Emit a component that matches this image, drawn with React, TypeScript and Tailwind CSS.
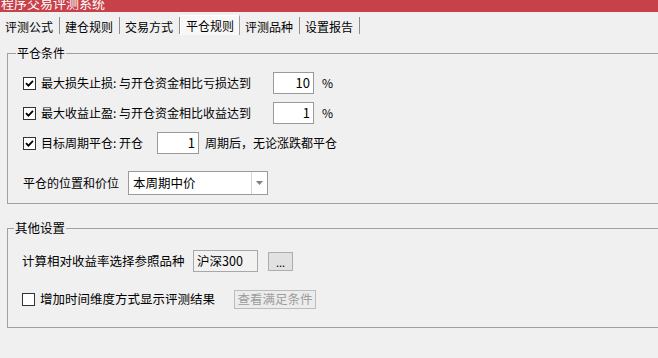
const font = { fontFamily: '"Noto Sans CJK SC", "Noto Sans", sans-serif' };

const tabs = ["评测公式", "建仓规则", "交易方式", "平仓规则", "评测品种", "设置报告"];

const Check = ({ checked }: { checked: boolean }) => (
  <div className="w-[13px] h-[13px] shrink-0 bg-white border border-[#333333] flex items-center justify-center">
    {checked && (
      <svg width="9" height="9" viewBox="0 0 9 9">
        <path d="M1 4.2 L3.4 6.6 L8 1.8" fill="none" stroke="#000" strokeWidth="1.8" />
      </svg>
    )}
  </div>
);

const NumBox = ({ value, w }: { value: string; w: string }) => (
  <div className={`${w} h-[22px] bg-white border border-[#9a9a9a] flex items-center justify-end pr-[3px] text-[13px]`}>
    {value}
  </div>
);

export default function App() {
  return (
    <div className="w-[658px] h-[358px] bg-[#f0f0f0] overflow-hidden text-[12px] text-black" style={font}>
      <div className="h-[12px] bg-[#c8414a] overflow-hidden">
        <div className="text-white text-[13px] leading-[13px] -mt-[4px] pl-[1px]">程序交易评测系统</div>
      </div>

      <div className="h-[23px] flex items-end">
        {tabs.map((t, i) =>
          i === 3 ? (
            <div
              key={t}
              className="w-[60px] h-[20px] pl-[5px] leading-[19px] bg-[#f8f8f8] border-t border-l border-white border-r border-r-[#a0a0a0]"
            >
              {t}
            </div>
          ) : (
            <div key={t} className="w-[60px] h-[17px] mb-[1px] pl-[5px] leading-[19px] border-r border-[#8c8c8c]">
              {t}
            </div>
          )
        )}
      </div>

      <fieldset className="mt-[12px] ml-[7px] w-[700px] border border-[#a0a0a0] pl-[15px] pt-[13px] pb-[8px]">
        <legend className="-ml-[7px] px-[1px] leading-[12px]">平仓条件</legend>
        <div className="flex flex-col gap-[8px]">
          <div className="flex items-center h-[22px]">
            <Check checked />
            <span className="ml-[5px] w-[232px]">最大损失止损: 与开仓资金相比亏损达到</span>
            <NumBox value="10" w="w-[41px]" />
            <span className="ml-[8px]">%</span>
          </div>
          <div className="flex items-center h-[22px]">
            <Check checked />
            <span className="ml-[5px] w-[232px]">最大收益止盈: 与开仓资金相比收益达到</span>
            <NumBox value="1" w="w-[41px]" />
            <span className="ml-[8px]">%</span>
          </div>
          <div className="flex items-center h-[22px]">
            <Check checked />
            <span className="ml-[5px] w-[116px]">目标周期平仓: 开仓</span>
            <NumBox value="1" w="w-[42px]" />
            <span className="ml-[6px]">周期后，无论涨跌都平仓</span>
          </div>
        </div>
        <div className="flex items-center h-[24px] mt-[17px]">
          <span className="w-[105px]">平仓的位置和价位</span>
          <div className="w-[140px] h-[24px] bg-white border border-[#9a9a9a] flex">
            <div className="flex-1 pl-[4px] leading-[22px] text-[12.5px]">本周期中价</div>
            <div className="w-[16px] border-l border-[#d6d6d6] flex items-center justify-center">
              <svg width="7" height="4" viewBox="0 0 7 4">
                <path d="M0 0 L7 0 L3.5 4 Z" fill="#808080" />
              </svg>
            </div>
          </div>
        </div>
      </fieldset>

      <fieldset className="mt-[18px] ml-[7px] w-[700px] border border-[#a0a0a0] pl-[14px] pt-[16px] pb-[17px]">
        <legend className="-ml-[8px] px-[1px] leading-[12px] text-[12.5px]">其他设置</legend>
        <div className="flex items-center h-[22px]">
          <span className="w-[171px] text-[12.5px]">计算相对收益率选择参照品种</span>
          <div className="w-[65px] h-[22px] bg-[#f2f2f2] border border-[#a8a8a8] pl-[3px] leading-[20px] text-[12.5px]">
            沪深300
          </div>
          <div className="ml-[10px] w-[25px] h-[19px] bg-[#e1e1e1] border border-[#adadad] flex items-end justify-center leading-[12px] text-[11px] pb-[2px]">
            ...
          </div>
        </div>
        <div className="flex items-center h-[22px] mt-[16px]">
          <Check checked={false} />
          <span className="ml-[5px] w-[194px] text-[12.5px]">增加时间维度方式显示评测结果</span>
          <div className="w-[82px] h-[19px] bg-[#ececec] border border-[#bcbcbc] text-[#9c9c9c] flex items-center justify-center text-[12.5px]">
            查看满足条件
          </div>
        </div>
      </fieldset>
    </div>
  );
}
